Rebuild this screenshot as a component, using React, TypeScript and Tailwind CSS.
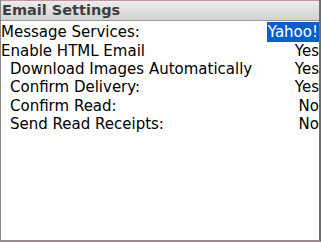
import React from "react";

const rows: { label: string; value: string; indent?: boolean; selected?: boolean }[] = [
  { label: "Message Services:", value: "Yahoo!", selected: true },
  { label: "Enable HTML Email", value: "Yes" },
  { label: "Download Images Automatically", value: "Yes", indent: true },
  { label: "Confirm Delivery:", value: "Yes", indent: true },
  { label: "Confirm Read:", value: "No", indent: true },
  { label: "Send Read Receipts:", value: "No", indent: true },
];

export default function App() {
  return (
    <div
      className="w-[321px] h-[242px] bg-white flex flex-col border-l border-r-2 border-b-2 border-l-[#8a8a8a] border-r-[#6e6e6e] border-b-[#9a8a8e] overflow-hidden"
      style={{ fontFamily: '"DejaVu Sans", sans-serif' }}
    >
      <div className="h-[21px] shrink-0 border-t border-t-[#c8949c] border-b border-b-[#9a9a9a] bg-gradient-to-b from-[#ececec] to-[#d2d2d2] flex items-center pl-px">
        <span className="text-[14.5px] font-bold text-[#3e3e3e] leading-none">Email Settings</span>
      </div>
      <div className="flex flex-col pt-px">
        {rows.map((r) => (
          <div
            key={r.label}
            className={
              (r.selected ? "h-[20px] items-stretch" : "h-[18.4px] items-center") +
              " flex justify-between text-[15px] leading-none text-black"
            }
          >
            <span className={(r.indent ? "pl-[9px] " : "") + "flex items-center"}>{r.label}</span>
            <span
              className={
                r.selected
                  ? "bg-[#0a5fcc] text-white flex items-center px-px"
                  : "flex items-center"
              }
            >
              {r.value}
            </span>
          </div>
        ))}
      </div>
    </div>
  );
}
